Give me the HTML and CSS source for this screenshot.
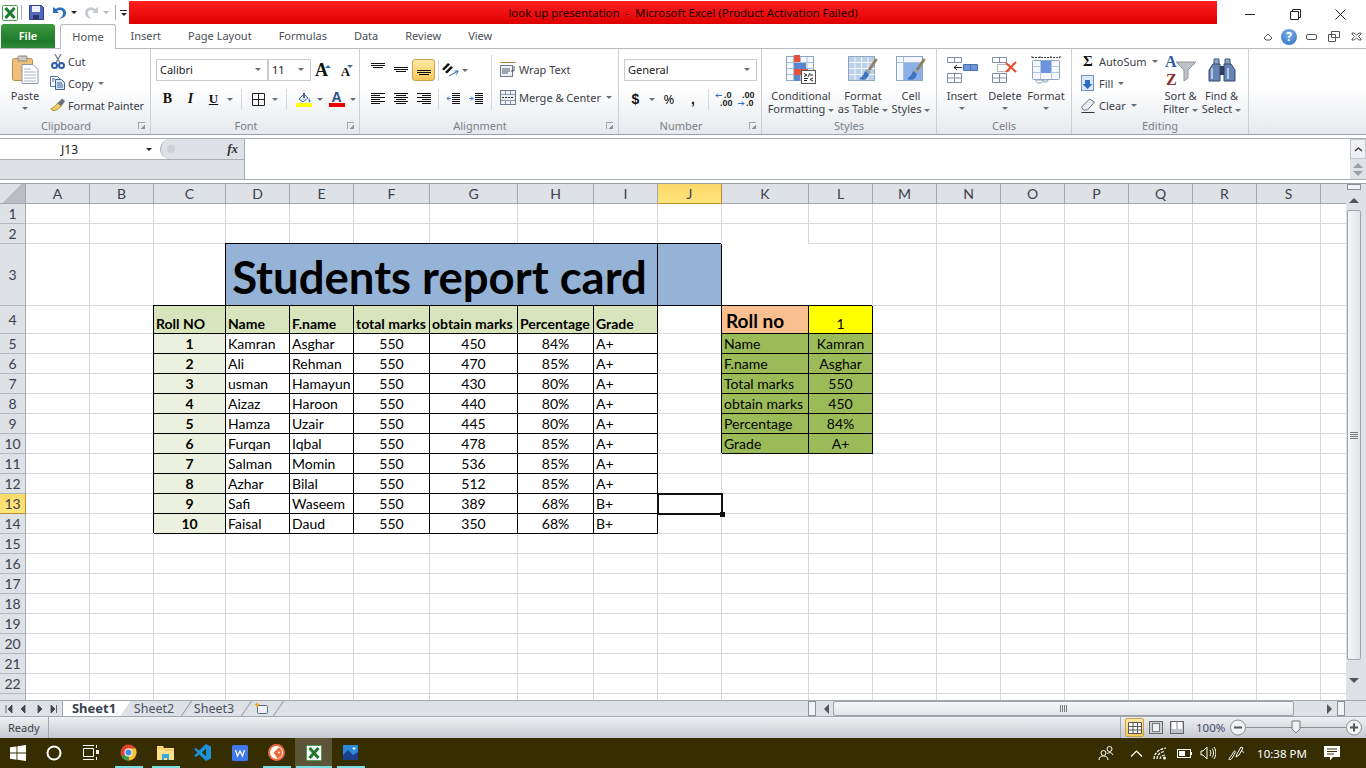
FILE: index.html
```html
<!DOCTYPE html>
<html>
<head>
  <meta charset="utf-8">
  <title>look up presentation - Microsoft Excel</title>
  <link rel="stylesheet" href="styles.css">
</head>
<body>
  <div class="window">

    <!-- title bar -->
    <div class="titlebar">
      <div class="qat">
        <svg class="qat-logo" width="16" height="16" viewBox="0 0 16 16"><rect x=".5" y=".5" width="15" height="15" rx="1" fill="#f2f8f0" stroke="#4f9a55"/><rect x="2" y="2" width="12" height="12" fill="#fff"/><path d="M3.5 3l9 10M12.5 3l-9 10" stroke="#1d7a2c" stroke-width="3"/></svg>
        <span class="qat-sep"></span>
        <svg class="qat-save" width="15" height="15" viewBox="0 0 15 15"><path d="M.5.5h12l2 2v12H.5z" fill="#5468b8" stroke="#2f3f86"/><rect x="3" y="1" width="8" height="6" fill="#eef1fa"/><rect x="4" y="10" width="6" height="4" fill="#28356f"/></svg>
        <svg class="qat-undo" width="15" height="14" viewBox="0 0 15 14"><path d="M1 1v6h6L5 5c3-2 6-.5 6 2 0 2-1 4-4 6 5-1 7-3 7-6 0-5-6-7-10-4z" fill="#2f6fc0"/></svg>
        <i class="caret caret-dark"></i>
        <svg class="qat-redo" width="15" height="14" viewBox="0 0 15 14"><path d="M14 1v6H8l2-2C7 3 4 4.500 4 7c0 2 1 4 4 6-5-1-7-3-7-6 0-5 6-7 10-4z" fill="#c3cad0"/></svg>
        <i class="caret caret-light"></i>
        <span class="qat-sep qat-sep-2"></span>
        <span class="qat-more"><b></b><i class="caret caret-dark"></i></span>
      </div>
      <div class="title-red">look up presentation  -  Microsoft Excel (Product Activation Failed)</div>
      <div class="winbtns">
        <svg width="11" height="11" viewBox="0 0 11 11"><path d="M0 5.500h10" stroke="#222"/></svg>
        <svg width="11" height="11" viewBox="0 0 11 11"><path d="M.5 2.500h8v8h-8zM2.500 2.500v-2h8v8h-2" fill="none" stroke="#222"/></svg>
        <svg width="11" height="11" viewBox="0 0 11 11"><path d="M.5.5l10 10M10.500.5l-10 10" stroke="#222"/></svg>
      </div>
    </div>

    <!-- ribbon tabs -->
    <div class="tabs">
      <div class="tab-file">File</div>
      <div class="tab tab-home">Home</div>
      <div class="tab">Insert</div>
      <div class="tab">Page Layout</div>
      <div class="tab">Formulas</div>
      <div class="tab">Data</div>
      <div class="tab">Review</div>
      <div class="tab">View</div>
      <div class="tab-icons">
        <svg width="10" height="8" viewBox="0 0 10 8"><path d="M1 5l4-4 4 4-2 2H3z" fill="none" stroke="#555"/></svg>
        <span class="help">?</span>
        <svg width="11" height="6" viewBox="0 0 11 6"><rect x=".5" y=".5" width="10" height="5" rx="1.500" fill="#fff" stroke="#555"/></svg>
        <svg width="12" height="11" viewBox="0 0 12 11"><path d="M3.500.5h8v6h-8zM.5 3.500h7v7h-7z" fill="#fff" stroke="#555"/></svg>
        <svg width="11" height="9" viewBox="0 0 11 9"><path d="M1 1h2l2.500 2L8 1h2v1L7.500 4.500 10 7v1H8L5.500 6 3 8H1V7l2.500-2.500L1 2z" fill="#fff" stroke="#555"/></svg>
      </div>
    </div>

    <!-- ribbon -->
    <div class="ribbon">

      <section class="group g-clipboard">
        <div class="group-body">
          <div class="big big-paste">
            <svg width="27" height="29" viewBox="0 0 27 29"><rect x=".5" y="3.500" width="20" height="22" rx="2" fill="#eec07c" stroke="#b98b4a"/><rect x="6" y="1" width="9" height="5" rx="1" fill="#c9c9c0" stroke="#8c8c80"/><path d="M10 28.500V9.500h11l5 5v14z" fill="#fff" stroke="#8a97a8"/><path d="M12 14h7M12 17h12M12 20h12M12 23h12M12 26h12" stroke="#a8b4c4"/></svg>
            <span>Paste</span>
            <i class="caret"></i>
          </div>
          <div class="small-col">
            <div class="small"><svg width="16" height="16" viewBox="0 0 16 16"><path d="M5 1l5 9M11 1L6 10" stroke="#7c8794" stroke-width="1.500"/><circle cx="4.500" cy="12.500" r="2.500" fill="none" stroke="#2e5fa8" stroke-width="2"/><circle cx="11.500" cy="12.500" r="2.500" fill="none" stroke="#2e5fa8" stroke-width="2"/></svg><span>Cut</span></div>
            <div class="small"><svg width="16" height="16" viewBox="0 0 16 16"><path d="M.5 1.500h7l2 2v8H.5z" fill="#fff" stroke="#5074a8"/><path d="M5.500 4.500h6l3 3v7h-9z" fill="#dde8f6" stroke="#3e64a0"/><path d="M7 8h5M7 10h6M7 12h6M2 4h3M2 6h2" stroke="#3e64a0"/></svg><span>Copy</span><i class="caret"></i></div>
            <div class="small"><svg width="17" height="16" viewBox="0 0 17 16"><path d="M1 12c3-1 5-3 7-6l4 3c-2 3-6 5-9 5z" fill="#f0d264" stroke="#a08a36"/><path d="M8 6l5-5 3 3-4 5z" fill="#6c7078"/></svg><span>Format Painter</span></div>
          </div>
        </div>
        <div class="group-label"><span>Clipboard</span><i class="launcher"></i></div>
      </section>

      <section class="group g-font">
        <div class="group-body rows">
          <div class="row">
            <div class="combo combo-font">Calibri<i class="caret"></i></div>
            <div class="combo combo-size">11<i class="caret"></i></div>
            <span class="tool grow">A<i class="tiny-up"></i></span>
            <span class="tool shrink">A<i class="tiny-down"></i></span>
          </div>
          <div class="row">
            <span class="tool fmt-b">B</span>
            <span class="tool fmt-i">I</span>
            <span class="tool fmt-u">U</span>
            <span class="drop"><i class="caret"></i></span>
            <span class="sep sep-font"></span>
            <span class="tool"><svg width="13" height="13" viewBox="0 0 13 13"><path d="M.5.500h12v12H.500zM6.500.500v12M.5 6.500h12" fill="none" stroke="#222"/></svg></span>
            <span class="drop"><i class="caret"></i></span>
            <span class="sep sep-font"></span>
            <span class="tool"><svg width="16" height="15" viewBox="0 0 16 15"><path d="M3 7l5-5 4 4-5 4z" fill="#dfe6ee" stroke="#4a6a94"/><path d="M7 1h2v5H7z" fill="#4a6a94"/><path d="M13 6c1 2 2 3 1 4s-2-1-1-4z" fill="#2f80c8"/><rect y="11" width="16" height="4" fill="#ffff00"/></svg></span>
            <span class="drop"><i class="caret"></i></span>
            <span class="tool color-a"><b>A</b><i></i></span>
            <span class="drop"><i class="caret"></i></span>
          </div>
        </div>
        <div class="group-label"><span>Font</span><i class="launcher"></i></div>
      </section>

      <section class="group g-align">
        <div class="group-body align-body">
          <div class="rows align-left">
            <div class="row">
              <span class="tool"><svg width="14" height="14" viewBox="0 0 14 14"><path d="M0 .5h14M0 2.500h14M2 4.500h10" stroke="#111"/></svg></span>
              <span class="tool"><svg width="14" height="14" viewBox="0 0 14 14"><path d="M0 4.500h14M0 6.500h14M2 8.500h10" stroke="#111"/></svg></span>
              <span class="tool tool-on"><svg width="14" height="14" viewBox="0 0 14 14"><path d="M0 7.500h14M0 9.500h14M2 11.500h10" stroke="#111"/></svg></span>
              <span class="sep sep-align"></span>
              <span class="tool orient"><svg width="18" height="14" viewBox="0 0 18 14"><path d="M0 6l6-6 2 1.500-6 6zM3 9l6-6 2 1.500-6 6z" fill="#111"/><path d="M7 13l9-5M16 8h-3.500M16 8l-1.500 3.500" stroke="#3a6ea8" fill="none"/></svg></span>
              <span class="drop orient-drop"><i class="caret"></i></span>
            </div>
            <div class="row">
              <span class="tool"><svg width="14" height="14" viewBox="0 0 14 14"><path d="M0 1.500h14M0 3.500h9M0 5.500h14M0 7.500h9M0 9.500h14M0 11.500h9" stroke="#111"/></svg></span>
              <span class="tool"><svg width="14" height="14" viewBox="0 0 14 14"><path d="M0 1.500h14M2 3.500h10M0 5.500h14M2 7.500h10M0 9.500h14M2 11.500h10" stroke="#111"/></svg></span>
              <span class="tool"><svg width="14" height="14" viewBox="0 0 14 14"><path d="M0 1.500h14M5 3.500h9M0 5.500h14M5 7.500h9M0 9.500h14M5 11.500h9" stroke="#111"/></svg></span>
              <span class="sep sep-align"></span>
              <span class="tool"><svg width="14" height="14" viewBox="0 0 14 14"><path d="M6 1.500h8M6 3.500h8M6 5.500h8M6 7.500h8M6 9.500h8M6 11.500h8" stroke="#111"/><path d="M5 6.500H1M3 4.500l-2 2 2 2" stroke="#3a7ac8" fill="none"/></svg></span>
              <span class="tool"><svg width="14" height="14" viewBox="0 0 14 14"><path d="M6 1.500h8M6 3.500h8M6 5.500h8M6 7.500h8M6 9.500h8M6 11.500h8" stroke="#111"/><path d="M0 6.500h4M2 4.500l2 2-2 2" stroke="#3a7ac8" fill="none"/></svg></span>
            </div>
          </div>
          <span class="sep sep-tall"></span>
          <div class="small-col align-right">
            <div class="small"><svg width="16" height="15" viewBox="0 0 16 15"><path d="M.5.5h15" stroke="#b07a30"/><rect x=".5" y="3.500" width="12" height="11" fill="#eef2f7" stroke="#6c7a8a"/><path d="M2 7h8M2 9h8M2 11h6M14 4v5h-3" stroke="#4c5a6a" fill="none"/></svg><span>Wrap Text</span></div>
            <div class="small"><svg width="16" height="15" viewBox="0 0 16 15"><rect x=".5" y=".5" width="15" height="14" fill="#eef2f7" stroke="#6c7a8a"/><path d="M1 4.500h14M1 10.500h14M5.500 1v3M10.500 1v3M5.500 11v3M10.500 11v3" stroke="#8898aa"/><path d="M2 7.500h12" stroke="#222" stroke-dasharray="2 1"/></svg><span>Merge &amp; Center</span><i class="caret"></i></div>
          </div>
        </div>
        <div class="group-label"><span>Alignment</span><i class="launcher"></i></div>
      </section>

      <section class="group g-number">
        <div class="group-body rows">
          <div class="row">
            <div class="combo combo-number">General<i class="caret"></i></div>
          </div>
          <div class="row">
            <span class="tool glyph-bold">$</span>
            <span class="drop"><i class="caret"></i></span>
            <span class="tool tool-wide glyph-pct">%</span>
            <span class="tool tool-wide glyph-bold">,</span>
            <span class="sep sep-num"></span>
            <span class="tool dec-tool"><svg width="20" height="17" viewBox="0 0 20 17"><path d="M1 4.500h6M3 2.500l-2 2 2 2" stroke="#2f6fc0" fill="none"/><text x="9" y="7" class="dec-text">.0</text><text x="5" y="15" class="dec-text">.00</text></svg></span>
            <span class="tool dec-tool"><svg width="20" height="17" viewBox="0 0 20 17"><text x="5" y="7" class="dec-text">.00</text><path d="M1 12.500h6M5 10.500l2 2-2 2" stroke="#2f6fc0" fill="none"/><text x="9" y="15" class="dec-text">.0</text></svg></span>
          </div>
        </div>
        <div class="group-label"><span>Number</span><i class="launcher"></i></div>
      </section>

      <section class="group g-styles">
        <div class="group-body bigs">
          <div class="big big-cond">
            <svg width="30" height="29" viewBox="0 0 30 29"><rect x=".5" y="1.500" width="27" height="24" fill="#f4f8fd" stroke="#8ea6c4"/><path d="M7.500 2v23M14.500 2v23M21 2v23M1 7.500h26M1 13.500h26M1 19.500h26" stroke="#a9bfd9"/><rect x="8" y="0" width="6" height="7" fill="#e8503c"/><rect x="8" y="8" width="12" height="6" fill="#5c86d0"/><rect x="8" y="14" width="14" height="6" fill="#e8503c"/><rect x="8" y="20" width="6" height="6" fill="#5c86d0"/><rect x="15.500" y="15.500" width="14" height="13" fill="#fff" stroke="#555"/><path d="M18 18.500l3 1.500-3 1.500M18 23.500h4M24 18l-2 4M24 20h3M18 25.500h3M27 23l-3 1.500 3 1.500" fill="none" stroke="#222"/></svg>
            <span>Conditional</span>
            <span>Formatting<i class="caret"></i></span>
          </div>
          <div class="big big-table">
            <svg width="30" height="29" viewBox="0 0 30 29"><rect x=".5" y="1.500" width="26" height="24" fill="#bcd0ea" stroke="#8ea6c4"/><path d="M7 2v23M13.500 2v23M20 2v23M1 7.500h26M1 13.500h26M1 19.500h26" stroke="#f4f8fd"/><path d="M28.500 4L21 15" stroke="#8f8264" stroke-width="3"/><path d="M19 14l4 3-2 2-4-3z" fill="#9aa0a8"/><path d="M17 16c-1 3-3 6-6 8 5 2 9 0 10-5z" fill="#3f72c0"/></svg>
            <span>Format</span>
            <span>as Table<i class="caret"></i></span>
          </div>
          <div class="big big-cell">
            <svg width="30" height="29" viewBox="0 0 30 29"><rect x=".5" y="1.500" width="26" height="24" fill="#f4f8fd" stroke="#8ea6c4"/><path d="M7.500 2v23M1 7.500h26" stroke="#a9bfd9"/><rect x="8" y="8" width="18" height="17" fill="#8eb0ea"/><path d="M28.500 4L21 15" stroke="#8f8264" stroke-width="3"/><path d="M19 14l4 3-2 2-4-3z" fill="#9aa0a8"/><path d="M17 16c-1 3-3 6-6 8 5 2 9 0 10-5z" fill="#3f72c0"/></svg>
            <span>Cell</span>
            <span>Styles<i class="caret"></i></span>
          </div>
        </div>
        <div class="group-label group-label-plain"><span>Styles</span></div>
      </section>

      <section class="group g-cells">
        <div class="group-body bigs">
          <div class="big big-ins">
            <svg width="31" height="29" viewBox="0 0 31 29"><path d="M.5 2.500h14v5H.5zM7.500 2.500v5M.5 18.500h14v9H.5zM.5 23h14M7.500 18.500v9" fill="#fff" stroke="#7c8ea6"/><path d="M16.500 9.500h14v6h-14zM23.500 9.500v6" fill="#6c94d8" stroke="#4c70b0"/><path d="M15 12.500H7M10 10l-3 2.500 3 2.500" fill="none" stroke="#222"/></svg>
            <span>Insert</span>
            <i class="caret"></i>
          </div>
          <div class="big big-del">
            <svg width="26" height="29" viewBox="0 0 26 29"><path d="M.5 2.500h14v5H.5zM7.500 2.500v5M.5 18.500h14v9H.5zM.5 23h14M7.500 18.500v9" fill="#fff" stroke="#7c8ea6"/><rect x="5.500" y="9.500" width="12" height="7" fill="#fff" stroke="#777" stroke-dasharray="1 1"/><path d="M14 8l10 9M24 7L14 17" stroke="#ea4c2c" stroke-width="2"/></svg>
            <span>Delete</span>
            <i class="caret"></i>
          </div>
          <div class="big big-fmt">
            <svg width="30" height="29" viewBox="0 0 30 29"><path d="M1 2.500h28M1 1v3M9 1v3M20 1v3M29 1v3" stroke="#444" stroke-dasharray="2 1"/><rect x="1.500" y="5.500" width="27" height="19" rx="1" fill="#f4f8fd" stroke="#8ea6c4"/><path d="M9.500 6v18M20.500 6v18M2 11.500h26M2 17.500h26" stroke="#b8c8dc"/><rect x="10" y="6" width="10" height="12" fill="#6c94e0"/><path d="M5 25h7c0 2-1 3-3 3H7c-1 0-2-1-2-3zM12 25h5c0 2-1 2-2 2h-2z" fill="#fff" stroke="#8ea6c4"/></svg>
            <span>Format</span>
            <i class="caret"></i>
          </div>
        </div>
        <div class="group-label group-label-plain"><span>Cells</span></div>
      </section>

      <section class="group g-editing">
        <div class="group-body edit-body">
          <div class="small-col">
            <div class="small"><span class="sigma">Σ</span><span>AutoSum</span><i class="caret"></i></div>
            <div class="small"><svg width="14" height="16" viewBox="0 0 14 16"><rect x=".5" y=".5" width="12" height="15" fill="#dbe8f8" stroke="#6c94c8"/><path d="M4 5h5v4h2.500L6.500 14 1.500 9H4z" fill="#2f6fc0"/></svg><span>Fill</span><i class="caret"></i></div>
            <div class="small"><svg width="15" height="15" viewBox="0 0 15 15"><path d="M1 9l8-8 5 3-7 8H3z" fill="#e8ecf0" stroke="#6c7680"/><path d="M1 14.500h13" stroke="#333"/></svg><span>Clear</span><i class="caret"></i></div>
          </div>
          <div class="big big-sort">
            <svg width="32" height="37" viewBox="0 -3 32 37"><path d="M11 7h20l-8 8v8l-4 3V15z" fill="#bfc3c7" stroke="#8f9499"/><text x="0" y="12" class="az az-a">A</text><text x="1" y="30" class="az az-z">Z</text></svg>
            <span>Sort &amp;</span>
            <span>Filter<i class="caret"></i></span>
          </div>
          <div class="big big-find">
            <svg width="28" height="27" viewBox="0 0 28 27"><path d="M6 3h5v6H6zM17 3h5v6h-5z" fill="#8ea4c6" stroke="#42587c"/><path d="M1 25V14l4-6h7v17zM27 25V14l-4-6h-7v17z" fill="#6684b4" stroke="#34496e"/><rect x="12" y="10" width="4" height="9" fill="#2c3f60"/><path d="M4 12v11M20 12v11" stroke="#b4c6e2" stroke-width="2"/></svg>
            <span>Find &amp;</span>
            <span>Select<i class="caret"></i></span>
          </div>
        </div>
        <div class="group-label group-label-plain"><span>Editing</span></div>
      </section>
    </div>

    <!-- formula bar -->
    <div class="formula">
      <div class="formula-left">
        <div class="formula-top">
          <div class="namebox">J13<i class="caret caret-dark"></i></div>
          <div class="fx-box"><i class="fx-dot"></i><span class="fx">fx</span></div>
        </div>
        <div class="formula-gap"></div>
      </div>
      <div class="formula-input"></div>
      <div class="formula-scroll">
        <span class="fs-up"><svg width="9" height="5" viewBox="0 0 9 5"><path d="M1 4l3.500-3L8 4" fill="none" stroke="#444" stroke-width="1.500"/></svg></span>
        <span class="fs-tri"><i class="tri-up"></i><i class="tri-down"></i></span>
      </div>
    </div>
    <div class="formula-strip"></div>

    <!-- sheet -->
    <div class="sheet-area">
      <div class="grid-wrap">
        <table class="grid">
          <colgroup>
            <col class="c-h"><col class="c-64"><col class="c-64"><col class="c-72"><col class="c-64"><col class="c-64"><col class="c-76"><col class="c-88"><col class="c-76"><col class="c-64"><col class="c-64"><col class="c-87"><col class="c-64"><col class="c-64"><col class="c-64"><col class="c-64"><col class="c-64"><col class="c-64"><col class="c-64"><col class="c-64"><col class="c-h">
          </colgroup>
          <tr class="r-head"><th class="corner"></th><th>A</th><th>B</th><th>C</th><th>D</th><th>E</th><th>F</th><th>G</th><th>H</th><th>I</th><th class="active">J</th><th>K</th><th>L</th><th>M</th><th>N</th><th>O</th><th>P</th><th>Q</th><th>R</th><th>S</th><th></th></tr>
          <tr><th>1</th><td></td><td></td><td></td><td></td><td></td><td></td><td></td><td></td><td></td><td></td><td></td><td></td><td></td><td></td><td></td><td></td><td></td><td></td><td></td><td></td></tr>
          <tr><th>2</th><td></td><td></td><td></td><td></td><td></td><td></td><td></td><td></td><td></td><td></td><td class="no-bottom"></td><td></td><td></td><td></td><td></td><td></td><td></td><td></td><td></td><td></td></tr>
          <tr class="r-3"><th>3</th><td></td><td></td><td></td><td class="b title-cell" colspan="6">Students report card</td><td class="b title-fill"></td><td class="no-right"></td><td></td><td></td><td></td><td></td><td></td><td></td><td></td><td></td><td></td></tr>
          <tr class="r-4"><th>4</th><td></td><td></td><td class="b hd">Roll NO</td><td class="b hd">Name</td><td class="b hd">F.name</td><td class="b hd">total marks</td><td class="b hd">obtain marks</td><td class="b hd">Percentage</td><td class="b hd">Grade</td><td></td><td class="b rollno">Roll no</td><td class="b rollval">1</td><td></td><td></td><td></td><td></td><td></td><td></td><td></td><td></td></tr>
          <tr><th>5</th><td></td><td></td><td class="b roll">1</td><td class="b">Kamran</td><td class="b">Asghar</td><td class="b ctr">550</td><td class="b ctr">450</td><td class="b ctr">84%</td><td class="b">A+</td><td></td><td class="b lk">Name</td><td class="b lk ctr">Kamran</td><td></td><td></td><td></td><td></td><td></td><td></td><td></td><td></td></tr>
          <tr><th>6</th><td></td><td></td><td class="b roll">2</td><td class="b">Ali</td><td class="b">Rehman</td><td class="b ctr">550</td><td class="b ctr">470</td><td class="b ctr">85%</td><td class="b">A+</td><td></td><td class="b lk">F.name</td><td class="b lk ctr">Asghar</td><td></td><td></td><td></td><td></td><td></td><td></td><td></td><td></td></tr>
          <tr><th>7</th><td></td><td></td><td class="b roll">3</td><td class="b">usman</td><td class="b">Hamayun</td><td class="b ctr">550</td><td class="b ctr">430</td><td class="b ctr">80%</td><td class="b">A+</td><td></td><td class="b lk">Total marks</td><td class="b lk ctr">550</td><td></td><td></td><td></td><td></td><td></td><td></td><td></td><td></td></tr>
          <tr><th>8</th><td></td><td></td><td class="b roll">4</td><td class="b">Aizaz</td><td class="b">Haroon</td><td class="b ctr">550</td><td class="b ctr">440</td><td class="b ctr">80%</td><td class="b">A+</td><td></td><td class="b lk">obtain marks</td><td class="b lk ctr">450</td><td></td><td></td><td></td><td></td><td></td><td></td><td></td><td></td></tr>
          <tr><th>9</th><td></td><td></td><td class="b roll">5</td><td class="b">Hamza</td><td class="b">Uzair</td><td class="b ctr">550</td><td class="b ctr">445</td><td class="b ctr">80%</td><td class="b">A+</td><td></td><td class="b lk">Percentage</td><td class="b lk ctr">84%</td><td></td><td></td><td></td><td></td><td></td><td></td><td></td><td></td></tr>
          <tr><th>10</th><td></td><td></td><td class="b roll">6</td><td class="b">Furqan</td><td class="b">Iqbal</td><td class="b ctr">550</td><td class="b ctr">478</td><td class="b ctr">85%</td><td class="b">A+</td><td></td><td class="b lk">Grade</td><td class="b lk ctr">A+</td><td></td><td></td><td></td><td></td><td></td><td></td><td></td><td></td></tr>
          <tr><th>11</th><td></td><td></td><td class="b roll">7</td><td class="b">Salman</td><td class="b">Momin</td><td class="b ctr">550</td><td class="b ctr">536</td><td class="b ctr">85%</td><td class="b">A+</td><td></td><td></td><td></td><td></td><td></td><td></td><td></td><td></td><td></td><td></td><td></td></tr>
          <tr><th>12</th><td></td><td></td><td class="b roll">8</td><td class="b">Azhar</td><td class="b">Bilal</td><td class="b ctr">550</td><td class="b ctr">512</td><td class="b ctr">85%</td><td class="b">A+</td><td></td><td></td><td></td><td></td><td></td><td></td><td></td><td></td><td></td><td></td><td></td></tr>
          <tr><th class="active">13</th><td></td><td></td><td class="b roll">9</td><td class="b">Safi</td><td class="b">Waseem</td><td class="b ctr">550</td><td class="b ctr">389</td><td class="b ctr">68%</td><td class="b">B+</td><td class="selected"></td><td></td><td></td><td></td><td></td><td></td><td></td><td></td><td></td><td></td><td></td></tr>
          <tr><th>14</th><td></td><td></td><td class="b roll">10</td><td class="b">Faisal</td><td class="b">Daud</td><td class="b ctr">550</td><td class="b ctr">350</td><td class="b ctr">68%</td><td class="b">B+</td><td></td><td></td><td></td><td></td><td></td><td></td><td></td><td></td><td></td><td></td><td></td></tr>
          <tr><th>15</th><td></td><td></td><td></td><td></td><td></td><td></td><td></td><td></td><td></td><td></td><td></td><td></td><td></td><td></td><td></td><td></td><td></td><td></td><td></td><td></td></tr>
          <tr><th>16</th><td></td><td></td><td></td><td></td><td></td><td></td><td></td><td></td><td></td><td></td><td></td><td></td><td></td><td></td><td></td><td></td><td></td><td></td><td></td><td></td></tr>
          <tr><th>17</th><td></td><td></td><td></td><td></td><td></td><td></td><td></td><td></td><td></td><td></td><td></td><td></td><td></td><td></td><td></td><td></td><td></td><td></td><td></td><td></td></tr>
          <tr><th>18</th><td></td><td></td><td></td><td></td><td></td><td></td><td></td><td></td><td></td><td></td><td></td><td></td><td></td><td></td><td></td><td></td><td></td><td></td><td></td><td></td></tr>
          <tr><th>19</th><td></td><td></td><td></td><td></td><td></td><td></td><td></td><td></td><td></td><td></td><td></td><td></td><td></td><td></td><td></td><td></td><td></td><td></td><td></td><td></td></tr>
          <tr><th>20</th><td></td><td></td><td></td><td></td><td></td><td></td><td></td><td></td><td></td><td></td><td></td><td></td><td></td><td></td><td></td><td></td><td></td><td></td><td></td><td></td></tr>
          <tr><th>21</th><td></td><td></td><td></td><td></td><td></td><td></td><td></td><td></td><td></td><td></td><td></td><td></td><td></td><td></td><td></td><td></td><td></td><td></td><td></td><td></td></tr>
          <tr><th>22</th><td></td><td></td><td></td><td></td><td></td><td></td><td></td><td></td><td></td><td></td><td></td><td></td><td></td><td></td><td></td><td></td><td></td><td></td><td></td><td></td></tr>
          <tr><th></th><td></td><td></td><td></td><td></td><td></td><td></td><td></td><td></td><td></td><td></td><td></td><td></td><td></td><td></td><td></td><td></td><td></td><td></td><td></td><td></td></tr>
        </table>
      </div>
      <div class="vscroll">
        <div class="v-split"></div>
        <div class="v-btn"><i class="tri-up tri-dark"></i></div>
        <div class="v-track"><div class="v-thumb"><b></b></div></div>
        <div class="v-btn v-btn-end"><i class="tri-down tri-dark"></i></div>
      </div>
    </div>

    <!-- sheet tabs and horizontal scrollbar -->
    <div class="sheetbar">
      <div class="sheet-nav">
        <svg width="56" height="10" viewBox="0 0 56 10"><path d="M1 1v8M7 1L3 5l4 4zM20 1l-4 4 4 4zM33 1l4 4-4 4zM46 1l4 4-4 4zM51.500 1v8" fill="#444" stroke="#444" stroke-width=".8"/></svg>
      </div>
      <div class="sheet-tab sheet-on">Sheet1</div>
      <div class="sheet-tab">Sheet2</div>
      <div class="sheet-tab">Sheet3</div>
      <div class="sheet-tab sheet-new"><svg width="15" height="13" viewBox="0 0 15 13"><rect x="3.500" y="3.500" width="10" height="8" rx="1" fill="#eef2f7" stroke="#5a6a80"/><path d="M3 0l1 2 2 .5-2 1L3 6 2 3.500 0 2.500 2 2z" fill="#e8a820"/></svg></div>
      <div class="hscroll">
        <span class="h-split"></span>
        <i class="tri-left"></i>
        <div class="h-thumb"><b></b></div>
        <i class="tri-right"></i>
        <span class="h-split h-split-2"></span>
      </div>
    </div>

    <!-- status bar -->
    <div class="statusbar">
      <span class="ready">Ready</span>
      <span class="status-sep"></span>
      <div class="status-right">
        <span class="status-sep"></span>
        <span class="view view-on"><svg width="14" height="12" viewBox="0 0 14 12"><path d="M.5.5h13v11H.5zM.5 4.500h13M.5 8h13M5 .5v11M9.500.5v11" fill="#fff" stroke="#555"/></svg></span>
        <span class="view"><svg width="14" height="13" viewBox="0 0 14 13"><rect x=".5" y=".5" width="13" height="12" fill="#cdd0d5" stroke="#666"/><rect x="3.500" y="2.500" width="7" height="8" fill="#eef0f2" stroke="#777"/></svg></span>
        <span class="view"><svg width="14" height="13" viewBox="0 0 14 13"><rect x=".5" y=".5" width="13" height="12" fill="#bfc3c8" stroke="#666"/><rect x="2" y="1" width="4" height="7" fill="#fff"/><rect x="8" y="1" width="4" height="7" fill="#fff"/></svg></span>
        <span class="zoom-pct">100%</span>
        <svg class="zoom" width="136" height="21" viewBox="0 0 136 21"><path d="M15 10.500h101" stroke="#8a8f96"/><path d="M62 4h8v8l-4 4-4-4z" fill="#eef0f3" stroke="#777"/><circle cx="8" cy="10.500" r="7.500" fill="#f2f3f5" stroke="#8a8f96"/><path d="M4 10.500h8" stroke="#555" stroke-width="2"/><circle cx="124" cy="10.500" r="7.500" fill="#f2f3f5" stroke="#8a8f96"/><path d="M120 10.500h8M124 6.500v8" stroke="#555" stroke-width="2"/></svg>
      </div>
    </div>

    <!-- taskbar -->
    <div class="taskbar">
      <div class="task"><svg width="16" height="16" viewBox="0 0 16 16"><path d="M0 2.300l6.500-.9v6.200H0zM7.400 1.300L16 0v7.600H7.400zM0 8.500h6.500v6.200L0 13.700zM7.400 8.500H16V16l-8.600-1.200z" fill="#fff"/></svg></div>
      <div class="task"><svg width="16" height="16" viewBox="0 0 16 16"><circle cx="8" cy="8" r="6.500" fill="none" stroke="#fff" stroke-width="2"/></svg></div>
      <div class="task"><svg width="17" height="15" viewBox="0 0 17 15"><path d="M1.500 3.500h10v8h-10zM1 .5h11M1 14.500h11M14.500 0v3M14.500 12v3" fill="none" stroke="#fff"/><rect x="14" y="5" width="3" height="4" fill="#fff"/></svg></div>
      <div class="task task-first running"><svg width="17" height="17" viewBox="0 0 17 17"><circle cx="8.500" cy="8.500" r="8" fill="#e0432f"/><path d="M8.500 8.500L1.500 12.500A8 8 0 0 0 9 16.500z" fill="#3a9a48"/><path d="M8.500 8.500L9 16.500A8 8 0 0 0 16.500 8.500L16 4.500H8.500z" fill="#f4c430"/><circle cx="8.500" cy="8.500" r="4" fill="#fff"/><circle cx="8.500" cy="8.500" r="3" fill="#4a88e8"/></svg></div>
      <div class="task running"><svg width="17" height="15" viewBox="0 0 17 15"><path d="M0 1h6l1 2h10v12H0z" fill="#fde08a"/><path d="M0 3h7l1 2h9" fill="none" stroke="#eebc50"/><path d="M5 9h7v6h-2v-2H7v2H5z" fill="#36a8e0"/></svg></div>
      <div class="task"><svg width="17" height="17" viewBox="0 0 17 17"><path d="M12 0l5 2.500v12L12 17 5 10.500 2 13 0 11.800 3.500 8.500 0 5.200 2 4l3 2.500zM12 4.800L8 8.500l4 3.700z" fill="#1d90d8"/></svg></div>
      <div class="task"><svg width="16" height="16" viewBox="0 0 16 16"><rect width="16" height="16" rx="1.500" fill="#3f78ee"/><path d="M3.500 5l2 6 2.500-5 2.500 5 2-6" fill="none" stroke="#fff" stroke-width="1.300"/></svg></div>
      <div class="task running"><svg width="17" height="17" viewBox="0 0 17 17"><circle cx="8.500" cy="8.500" r="7.500" fill="#fff" stroke="#f0683c" stroke-width="2"/><path d="M11 3.500L5.500 8.500 9.500 14.500A6 6 0 0 0 11 3.500z" fill="#f0683c"/><circle cx="11" cy="8.500" r="1" fill="#fff"/></svg></div>
      <div class="task task-active"><svg width="16" height="16" viewBox="0 0 16 16"><rect x=".5" y=".5" width="15" height="15" rx="1" fill="#fff" stroke="#4f9a55"/><path d="M3.500 3l9 10M12.500 3l-9 10" stroke="#1d7a2c" stroke-width="3"/></svg></div>
      <div class="task running"><svg width="15" height="15" viewBox="0 0 15 15"><rect width="15" height="15" fill="#2a8ad8"/><path d="M0 15V10l5-5 5 5 5-3v8z" fill="#1c3f8c"/><path d="M11 2v3M9.500 3.500h3" stroke="#fff"/></svg></div>
      <div class="tray">
        <span class="tray-item"><svg width="16" height="15" viewBox="0 0 16 15"><circle cx="5.500" cy="7" r="2.500" fill="none" stroke="#fff"/><path d="M1 14c0-3 2-4 4.500-4S10 11 10 14" fill="none" stroke="#fff"/><circle cx="11.500" cy="3" r="2.500" fill="none" stroke="#fff"/><path d="M9 8c1-2 5-2 6 1" fill="none" stroke="#fff"/></svg></span>
        <span class="tray-item tray-chevron"><svg width="13" height="7" viewBox="0 0 13 7"><path d="M1 6.500l5.500-5.500 5.500 5.500" fill="none" stroke="#fff" stroke-width="1.200"/></svg></span>
        <span class="tray-item"><svg width="14" height="14" viewBox="0 0 14 14"><path d="M1 13C1 7 6 3 13 2M4 13c0-4 3-7 8-7.500M7 13c0-2 1.500-3.500 5-4" fill="none" stroke="#fff" stroke-width="1.200" stroke-dasharray="3 1"/><circle cx="11.500" cy="12" r="1.500" fill="#fff"/></svg></span>
        <span class="tray-item"><svg width="15" height="9" viewBox="0 0 15 9"><rect x=".5" y=".5" width="13" height="8" fill="none" stroke="#fff"/><rect x="2" y="2" width="6" height="5" fill="#fff"/><rect x="14" y="3" width="1" height="3" fill="#fff"/></svg></span>
        <span class="tray-item"><svg width="16" height="14" viewBox="0 0 16 14"><path d="M1 5h2l4-4v12l-4-4H1z" fill="none" stroke="#fff"/><path d="M10 4c1 2 1 4 0 6M12 2.500c2 3 2 6 0 9M14 1c2.500 4 2.500 8 0 12" fill="none" stroke="#fff"/></svg></span>
        <span class="tray-item tray-pen"><svg width="17" height="17" viewBox="0 0 17 17"><path d="M9 9l4-7 2 1-4 7-3 2zM13 6c2 0 3 1 2 2" fill="none" stroke="#fff"/><path d="M1 15c0-3 3-4 4-7s3-2 2 0-3 6-5 7" fill="none" stroke="#fff"/></svg></span>
        <span class="clock">10:38 PM</span>
        <span class="tray-item tray-note"><svg width="16" height="15" viewBox="0 0 16 15"><path d="M0 0h16v11H9l-3 3.500V11H0z" fill="#fff"/><path d="M3 3h10M3 5.500h10M3 8h7" stroke="#3a3000"/></svg></span>
      </div>
    </div>
  </div>
</body>
</html>
```

FILE: styles.css
```css
* {
  box-sizing: border-box;
}

html, body {
  margin: 0;
  padding: 0;
  width: 1366px;
  height: 768px;
  overflow: hidden;
}

body {
  font-family: "Noto Sans", sans-serif;
  font-size: 11px;
  color: #3c4048;
  background: #fff;
}

.window {
  display: flex;
  flex-direction: column;
  height: 768px;
}

i, b {
  display: block;
}

.caret {
  display: inline-block;
  width: 0;
  height: 0;
  border-left: 3px solid transparent;
  border-right: 3px solid transparent;
  border-top: 3px solid #6a6f76;
  vertical-align: middle;
}

.caret-dark {
  border-top-color: #222;
}

.caret-light {
  border-top-color: #b4b8bd;
}

/* title bar */
.titlebar {
  display: flex;
  height: 24px;
  flex: none;
}

.qat {
  display: flex;
  align-items: center;
  width: 129px;
  padding: 1px 0 0 2px;
}

.qat-logo {
  margin-right: 3px;
}

.qat-sep {
  width: 1px;
  height: 15px;
  background: #a8adb3;
}

.qat-save {
  margin-left: 7px;
}

.qat-undo {
  margin-left: 8px;
}

.qat .caret {
  margin-left: 4px;
}

.qat-redo {
  margin-left: 7px;
}

.qat-sep-2 {
  margin-left: 6px;
}

.qat-more {
  margin-left: 4px;
  width: 7px;
}

.qat-more b {
  height: 1px;
  width: 7px;
  background: #222;
  margin-bottom: 2px;
}

.qat-more .caret {
  display: block;
  margin: 0 0 0 .5px;
}

.title-red {
  width: 1088px;
  margin-top: 1px;
  padding-left: 20px;
  background: linear-gradient(#ff2020, #dd0000);
  color: #200000;
  font-size: 11.5px;
  letter-spacing: -.05px;
  line-height: 23px;
  text-align: center;
  white-space: pre;
}

.winbtns {
  flex: 1;
  display: flex;
  justify-content: space-between;
  align-items: center;
  padding: 4px 20px 0 28px;
}

/* tabs */
.tabs {
  display: flex;
  height: 25px;
  flex: none;
  padding-left: 1px;
  position: relative;
  z-index: 1;
}

.tab-file {
  width: 54px;
  height: 24px;
  margin-right: 5px;
  background: linear-gradient(#3e9a42, #1f7a2a 70%, #2d8a35);
  border-radius: 3px 3px 0 0;
  color: #fff;
  font-weight: 600;
  text-align: center;
  line-height: 23px;
}

.tab {
  padding: 0 13.5px;
  line-height: 24px;
  color: #4a4f58;
  white-space: nowrap;
}

.tab-home {
  width: 56px;
  height: 25px;
  padding: 0;
  margin-right: 1px;
  text-align: center;
  background: #fff;
  border: 1px solid #b5bac0;
  border-bottom: none;
  border-radius: 3px 3px 0 0;
}

.tab-icons {
  margin-left: auto;
  display: flex;
  align-items: center;
  gap: 11px;
  padding: 0 4px 0 0;
}

.help {
  width: 16px;
  height: 16px;
  margin: 0 -2px 0 -3px;
  border-radius: 50%;
  background: radial-gradient(circle at 50% 30%, #7fb0ea, #2c6ec4);
  color: #fff;
  font-weight: 700;
  font-size: 12px;
  line-height: 16px;
  text-align: center;
}

/* ribbon */
.ribbon {
  display: flex;
  height: 87px;
  flex: none;
  border-top: 1px solid #b5bac0;
  border-bottom: 1px solid #9ba0a7;
  background: linear-gradient(#fff, #fff 45%, #e6e9ed);
  margin-top: -1px;
}

.group {
  display: flex;
  flex-direction: column;
  border-right: 1px solid #ccd0d5;
}

.g-clipboard { width: 151px; }
.g-font { width: 209px; }
.g-align { width: 259px; }
.g-number { width: 143px; }
.g-styles { width: 175px; }
.g-cells { width: 135px; }
.g-editing { width: 177px; }

.group-body {
  flex: 1;
  display: flex;
}

.group-label {
  display: flex;
  align-items: center;
  height: 15px;
  padding-bottom: 2px;
  color: #7a7f86;
  font-size: 11px;
}

.group-label span {
  flex: 1;
  text-align: center;
  padding-right: 6px;
}

.group-label-plain span {
  padding-right: 0;
}

.launcher {
  width: 7px;
  height: 7px;
  margin-right: 5px;
  border: 1px solid #a2a7ad;
  border-width: 1px 0 0 1px;
  background: linear-gradient(135deg, transparent 60%, #8f949b 60%);
}

/* big ribbon buttons */
.big {
  display: flex;
  flex-direction: column;
  align-items: center;
  padding-top: 6px;
  line-height: 13px;
  white-space: nowrap;
}

.big svg {
  height: 29px;
  margin-bottom: 5px;
}

.big .caret {
  margin-left: 3px;
}

.big > .caret {
  margin: 5px 0 0;
}

.big-paste {
  width: 50px;
}

.bigs {
  padding-left: 6px;
}

.big-cond { width: 66px; }
.big-table { width: 58px; }
.big-cell { width: 38px; }

.g-cells .bigs {
  padding-left: 4px;
}

.big-ins { width: 42px; }
.big-del { width: 44px; }
.big-fmt { width: 38px; }

/* small ribbon buttons */
.small-col {
  padding-top: 1px;
}

.small {
  display: flex;
  align-items: center;
  height: 22px;
  white-space: nowrap;
}

.small svg, .sigma {
  margin-right: 3px;
  flex: none;
  width: 16px;
}

.g-clipboard .small {
  letter-spacing: -.1px;
}

.g-clipboard .small svg {
  margin-right: 2px;
}

.small .caret {
  margin-left: 5px;
}

.sigma {
  font-family: "Liberation Serif", serif;
  font-weight: 700;
  font-size: 15px;
  color: #111;
  text-align: center;
}

/* rows of small tools */
.rows {
  display: flex;
  flex-direction: column;
  gap: 7px;
  padding-top: 10px;
}

.g-font .rows, .g-font.group .group-body {
  padding-left: 5px;
}

.g-number .group-body {
  padding-left: 5px;
}

.row {
  display: flex;
  align-items: center;
  height: 22px;
}

.combo {
  display: flex;
  align-items: center;
  justify-content: space-between;
  height: 22px;
  padding: 0 6px 1px 3px;
  background: #fff;
  border: 1px solid #c9cdd2;
  color: #222;
}

.combo-font { width: 112px; }
.combo-size { width: 43px; }
.combo-number { width: 133px; }

.tool {
  display: flex;
  align-items: center;
  justify-content: center;
  width: 23px;
  height: 22px;
  color: #111;
  flex: none;
}

.tool-on {
  background: linear-gradient(#fde8a4, #f9c85a);
  border: 1px solid #c9a04e;
  border-radius: 3px;
}

.tool-wide {
  width: 24px;
}

.drop {
  display: flex;
  align-items: center;
  justify-content: center;
  width: 10px;
  height: 22px;
  flex: none;
}

.sep {
  display: block;
  width: 1px;
  height: 21px;
  background: #d4d7db;
  flex: none;
}

.sep-font {
  margin: 0 5px 0 6px;
}

.grow, .shrink, .fmt-b, .fmt-i, .fmt-u {
  font-family: "Liberation Serif", serif;
  font-weight: 700;
}

.grow {
  font-size: 18px;
  padding-right: 2px;
  position: relative;
}

.shrink {
  font-size: 13px;
  padding-top: 4px;
  position: relative;
}

.tiny-up, .tiny-down {
  position: absolute;
  top: 6px;
  right: 3px;
  width: 0;
  height: 0;
  border-left: 3px solid transparent;
  border-right: 3px solid transparent;
}

.tiny-up {
  border-bottom: 3px solid #3a6ea8;
}

.tiny-down {
  border-top: 3px solid #3a6ea8;
  right: 4px;
}

.fmt-b {
  font-size: 14px;
}

.fmt-i {
  font-size: 14px;
  font-style: italic;
}

.fmt-u {
  font-size: 13px;
  text-decoration: underline;
}

.color-a {
  flex-direction: column;
  color: #2c4a8c;
  font-family: "Liberation Sans", sans-serif;
  font-size: 14px;
  line-height: 12px;
}

.color-a i {
  width: 16px;
  height: 4px;
  background: #ee0000;
}

.align-body {
  padding-left: 6px;
}

.align-left {
  width: 125px;
}

.sep-align {
  margin: 0 2px 0 3px;
}

.orient {
  margin-left: -2px;
}

.orient-drop {
  margin-left: -2px;
}

.sep-tall {
  height: 55px;
  margin: 6px 7px 0 0;
}

.align-right {
  padding-top: 9px;
}

.align-right .small {
  margin-bottom: 6px;
  padding-left: 1px;
}

.glyph-bold {
  font-family: "Liberation Sans", sans-serif;
  font-weight: 700;
  font-size: 14px;
}

.glyph-pct {
  font-size: 13px;
}

.sep-num {
  margin: 0 5px 0 3px;
}

.dec-tool {
  width: 22px;
}

.dec-text {
  font-family: "Liberation Sans", sans-serif;
  font-size: 9px;
  font-weight: 700;
  fill: #222;
}

.edit-body {
  padding-left: 8px;
}

.edit-body .small-col {
  width: 80px;
}

.big-sort {
  width: 41px;
}

.big-find {
  width: 41px;
}

.big-sort svg {
  height: 37px;
  margin: -3px 0 0;
}

.az {
  font-family: "Liberation Serif", serif;
  font-weight: 700;
  font-size: 16px;
}

.az-a { fill: #2c5aa8; }
.az-z { fill: #8c2e2a; }

/* formula bar */
.formula {
  display: flex;
  height: 42px;
  flex: none;
  margin-top: 3px;
  border-top: 1px solid #a8adb3;
  border-bottom: 1px solid #a8adb3;
}

.formula-left {
  width: 245px;
  display: flex;
  flex-direction: column;
  border-right: 1px solid #a8adb3;
}

.formula-top {
  display: flex;
  height: 21px;
  border-bottom: 1px solid #a8adb3;
}

.namebox {
  display: flex;
  align-items: center;
  width: 160px;
  padding: 0 8px 0 61px;
  justify-content: space-between;
  color: #222;
  font-size: 12px;
}

.fx-box {
  flex: 1;
  display: flex;
  align-items: center;
  justify-content: space-between;
  padding: 0 6px 0 6px;
  background: #dee1e6;
  border-left: 1px solid #a8adb3;
  border-radius: 10px 0 0 10px;
}

.fx-dot {
  width: 8px;
  height: 8px;
  border-radius: 50%;
  background: #cdd0d4;
}

.fx {
  font-family: "Liberation Serif", serif;
  font-style: italic;
  font-weight: 700;
  font-size: 13px;
  color: #333;
}

.formula-gap {
  flex: 1;
  background: #dee1e6;
}

.formula-input {
  flex: 1;
}

.formula-scroll {
  width: 16px;
  margin-right: 0;
  display: flex;
  flex-direction: column;
  background: #dee1e6;
}

.fs-up {
  display: flex;
  align-items: center;
  justify-content: center;
  height: 20px;
  background: #eef0f3;
  border: 1px solid #c4c8cd;
}

.fs-tri {
  flex: 1;
  display: flex;
  flex-direction: column;
  align-items: center;
  justify-content: center;
  gap: 3px;
}

.tri-up, .tri-down {
  width: 0;
  height: 0;
  border-left: 5px solid transparent;
  border-right: 5px solid transparent;
}

.tri-up {
  border-bottom: 5px solid #9aa0a7;
}

.tri-down {
  border-top: 5px solid #9aa0a7;
}

.tri-dark.tri-up {
  border-bottom-color: #555;
}

.tri-dark.tri-down {
  border-top-color: #555;
}

.formula-strip {
  height: 4px;
  flex: none;
  border-bottom: 1px solid #9ba0a7;
}

/* sheet */
.sheet-area {
  display: flex;
  height: 516px;
  flex: none;
}

.grid-wrap {
  width: 1346px;
  overflow: hidden;
}

.grid {
  table-layout: fixed;
  width: 1346px;
  border-collapse: separate;
  border-spacing: 0;
  font-family: "Lato", sans-serif;
  font-size: 14px;
  color: #000;
}

.c-h { width: 26px; }
.c-64 { width: 64px; }
.c-72 { width: 72px; }
.c-76 { width: 76px; }
.c-87 { width: 87px; }
.c-88 { width: 88px; }

.grid tr {
  height: 20px;
}

.grid tr.r-3 {
  height: 62px;
}

.grid tr.r-4 {
  height: 28px;
}

.grid th, .grid td {
  padding: 0;
  overflow: hidden;
  white-space: nowrap;
}

.grid th {
  background: #dee1e6;
  border-right: 1px solid #a3a8ae;
  border-bottom: 1px solid #b4b8be;
  font-weight: 400;
  color: #3a4250;
  font-size: 14px;
  text-align: center;
}

.r-head th {
  border-bottom: 1px solid #a3a8ae;
}

.grid th.active {
  background: linear-gradient(#fcd86a, #ffe67c);
  border-right-color: #c28a30;
  border-bottom-color: #c28a30;
}

.corner {
  background: linear-gradient(135deg, #dee1e6 50%, #b9bdc3 50%) !important;
  background-size: 100% 100% !important;
}

.grid td {
  border-right: 1px solid #d8d8d8;
  border-bottom: 1px solid #d8d8d8;
  padding: 0 2px;
  vertical-align: bottom;
  line-height: 19px;
}

.grid td.no-bottom {
  border-bottom: none;
}

.grid td.no-right {
  border-right: none;
}

.grid td.b {
  border-right: 1px solid #000;
  border-bottom: 1px solid #000;
  box-shadow: -1px -1px 0 #000;
}

.ctr {
  text-align: center;
}

.grid td.title-cell {
  background: #95b3d7;
  font-weight: 700;
  font-size: 45.5px;
  line-height: 56px;
  padding-right: 6px;
  text-align: center;
}

.title-fill {
  background: #95b3d7;
}

.hd {
  background: #d8e4bc;
  font-weight: 700;
}

.roll {
  background: #ebf1de;
  font-weight: 700;
  text-align: center;
}

.rollno {
  background: #fabf8f;
  font-weight: 700;
}

.grid td.rollno {
  font-size: 19px;
  padding-left: 4px;
  line-height: 24px;
}

.rollval {
  background: #ffff00;
  text-align: center;
}

.lk {
  background: #9bbb59;
}

.grid td.selected {
  overflow: visible;
  position: relative;
  z-index: 1;
}

.selected::before {
  content: "";
  position: absolute;
  left: -1px;
  top: -1px;
  right: -2px;
  bottom: -2px;
  border: 2px solid #111;
}

.selected::after {
  content: "";
  position: absolute;
  right: -4px;
  bottom: -4px;
  width: 5px;
  height: 5px;
  background: #111;
}

/* vertical scrollbar */
.vscroll {
  width: 20px;
  display: flex;
  flex-direction: column;
  align-items: stretch;
  padding-right: 4px;
  background: #dee1e6;
}

.v-split {
  height: 7px;
  margin: 0 1px;
  background: #f2f3f5;
  border: 1px solid #8d9299;
}

.v-btn {
  height: 20px;
  display: flex;
  align-items: center;
  justify-content: center;
  flex: none;
}

.v-btn-end {
  height: 40px;
}

.v-track {
  flex: 1;
  padding: 0 1px;
}

.v-thumb {
  height: 450px;
  display: flex;
  align-items: center;
  justify-content: center;
  background: linear-gradient(90deg, #f5f6f8, #e2e5e9);
  border: 1px solid #9ea3aa;
  border-radius: 2px;
}

.v-thumb b {
  width: 8px;
  height: 7px;
  background: repeating-linear-gradient(#777 0 1px, transparent 1px 2px);
}

/* sheet tabs */
.sheetbar {
  display: flex;
  height: 17px;
  flex: none;
  background: #dee1e6;
  border-top: 1px solid #a3a8ae;
  border-bottom: 1px solid #a3a8ae;
  color: #4a5160;
  font-size: 12.5px;
  line-height: 15px;
}

.sheet-nav {
  width: 63px;
  display: flex;
  align-items: center;
  padding-left: 5px;
  border-right: 1px solid #a3a8ae;
}

.sheet-tab {
  position: relative;
  width: 60px;
  text-align: center;
  padding-right: 14px;
}

.sheet-tab::after {
  content: "";
  position: absolute;
  top: 0;
  right: 4px;
  height: 15px;
  border-right: 1px solid #8d9299;
  transform: skewX(-34deg);
}

.sheet-on {
  width: 68px;
  background: #fff;
  font-size: 13px;
  font-weight: 700;
  clip-path: polygon(0 0, 100% 0, 85% 100%, 0 100%);
  padding-right: 6px;
  color: #39404e;
}

.sheet-new {
  width: 42px;
  padding: 1px 0 0 3px;
  text-align: left;
}

.sheet-new::after {
  right: 14px;
}

.hscroll {
  display: flex;
  align-items: center;
  margin-left: auto;
  width: 558px;
  padding-right: 21px;
}

.h-split {
  width: 8px;
  height: 15px;
  background: #f2f3f5;
  border: 1px solid #8d9299;
  margin-right: 8px;
}

.tri-left, .tri-right {
  width: 0;
  height: 0;
  border-top: 5px solid transparent;
  border-bottom: 5px solid transparent;
}

.tri-left {
  border-right: 5px solid #555;
  margin-right: 4px;
}

.tri-right {
  border-left: 5px solid #555;
  margin: 0 5px 0 33px;
}

.h-thumb {
  width: 461px;
  height: 15px;
  display: flex;
  align-items: center;
  justify-content: center;
  background: linear-gradient(#f5f6f8, #e2e5e9);
  border: 1px solid #9ea3aa;
  border-radius: 2px;
}

.h-thumb b {
  width: 7px;
  height: 7px;
  background: repeating-linear-gradient(90deg, #777 0 1px, transparent 1px 2px);
}

.h-split-2 {
  margin: 0;
}

/* status bar */
.statusbar {
  display: flex;
  align-items: center;
  height: 21px;
  flex: none;
  padding-left: 8px;
  background: linear-gradient(#eef0f2, #c6cad0);
  color: #3c4048;
}

.ready {
  width: 40px;
}

.status-sep {
  width: 1px;
  height: 21px;
  background: #a3a8ae;
}

.status-right {
  margin-left: auto;
  display: flex;
  align-items: center;
}

.view {
  display: flex;
  align-items: center;
  justify-content: center;
  width: 19px;
  height: 19px;
  margin-right: 2px;
}

.view-on {
  margin-left: 4px;
  background: linear-gradient(#fde8a4, #f9c85a);
  border: 1px solid #c9a04e;
  border-radius: 2px;
}

.zoom-pct {
  width: 42px;
  padding-left: 8px;
  color: #4a4a6a;
  font-size: 11.5px;
}

/* taskbar */
.taskbar {
  display: flex;
  height: 30px;
  flex: none;
  background: #362e00;
}

.task {
  position: relative;
  display: flex;
  align-items: center;
  justify-content: center;
  width: 37px;
  padding-bottom: 1px;
  flex: none;
}

.taskbar .task:nth-child(-n+3) {
  width: 36px;
}

.task-first {
  margin-left: 2px;
}

.running::after {
  content: "";
  position: absolute;
  left: 5px;
  right: 4px;
  bottom: 0;
  height: 2px;
  background: #76dfe4;
}

.task-active {
  background: #5b5436;
}

.task-active::after {
  content: "";
  position: absolute;
  left: 1px;
  right: 0;
  bottom: 0;
  height: 2px;
  background: #76dfe4;
}

.tray {
  margin-left: auto;
  display: flex;
  align-items: center;
  padding-right: 22px;
  color: #fff;
}

.tray-item {
  display: flex;
  align-items: center;
  justify-content: center;
  width: 24px;
}

.tray-chevron {
  margin-left: 6px;
}

.tray-pen {
  margin-left: 4px;
}

.clock {
  width: 66px;
  padding-left: 2px;
  text-align: center;
  font-size: 11.5px;
}

.tray-note {
  margin-left: 6px;
}
```
